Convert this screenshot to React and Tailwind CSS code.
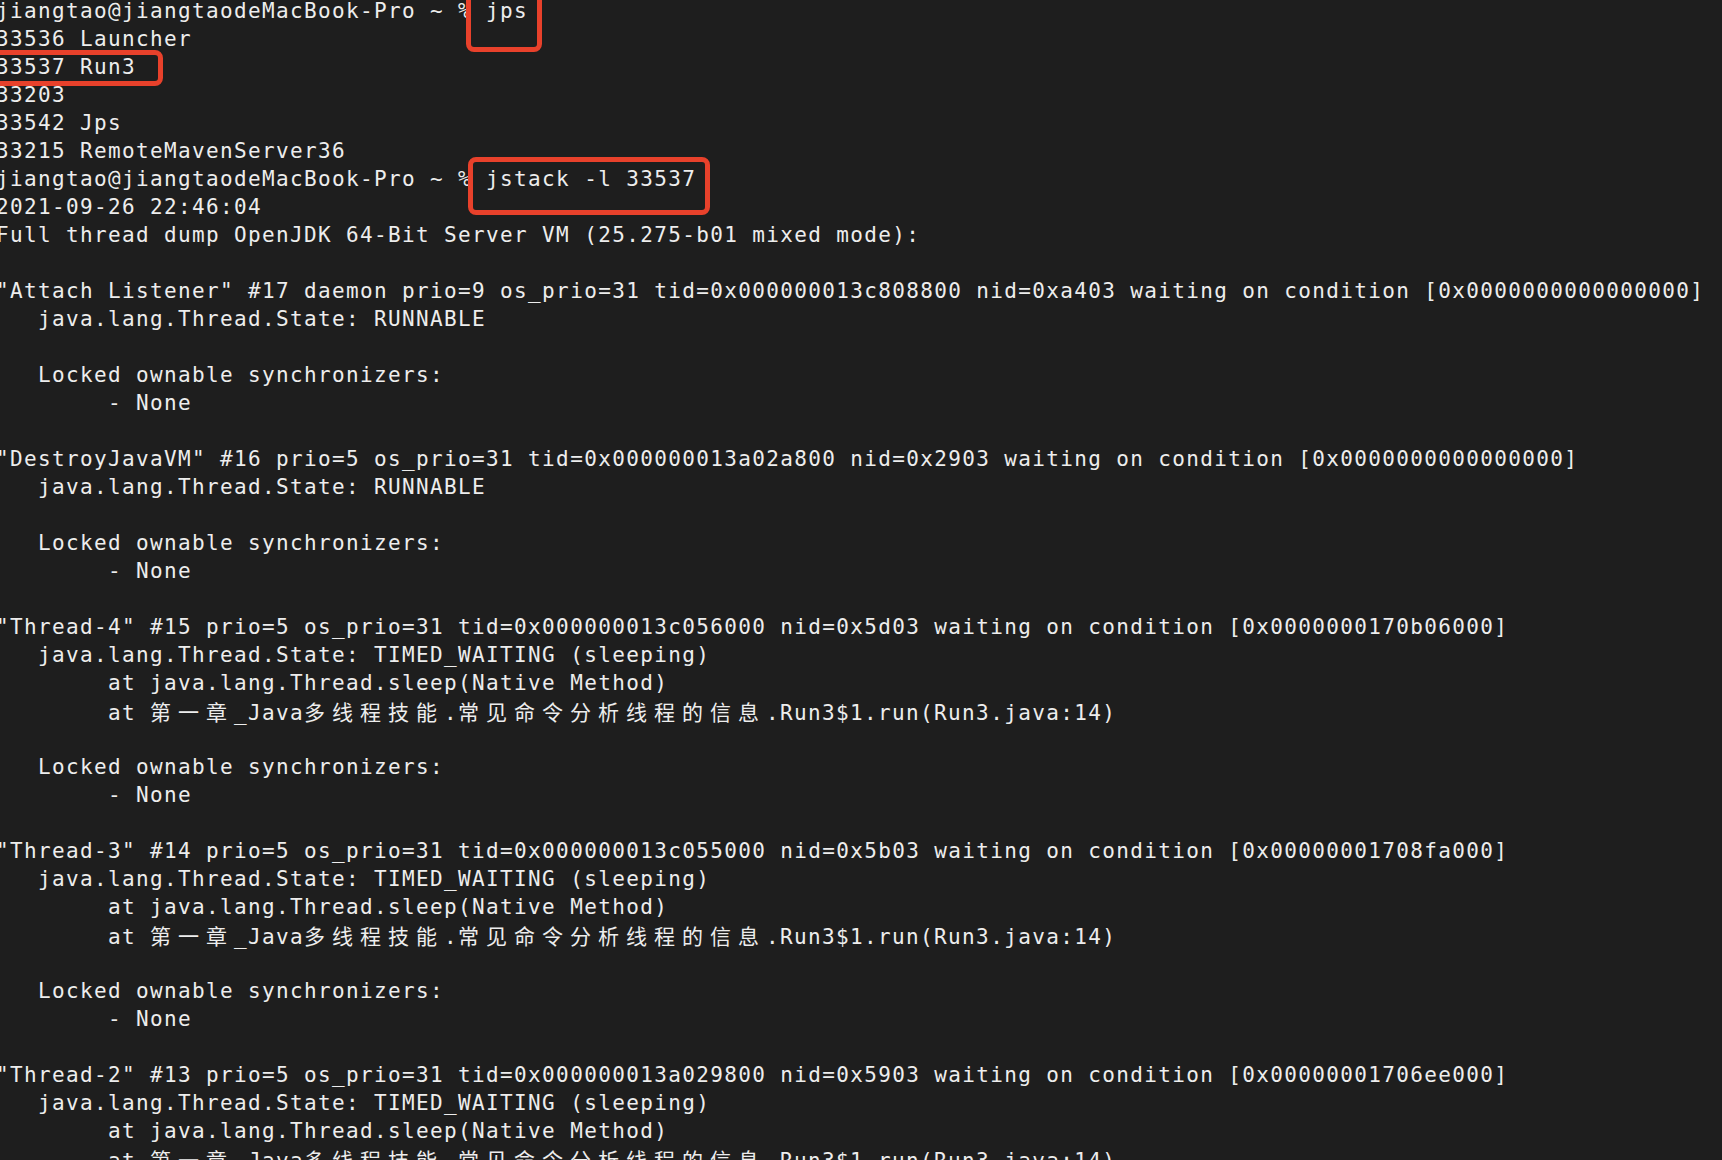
import React from "react";

const TAB = "        ";
const CJK = /[\u4e00-\u9fff]/;

const lines = [
  "jiangtao@jiangtaodeMacBook-Pro ~ % jps",
  "33536 Launcher",
  "33537 Run3",
  "33203",
  "33542 Jps",
  "33215 RemoteMavenServer36",
  "jiangtao@jiangtaodeMacBook-Pro ~ % jstack -l 33537",
  "2021-09-26 22:46:04",
  "Full thread dump OpenJDK 64-Bit Server VM (25.275-b01 mixed mode):",
  "",
  '"Attach Listener" #17 daemon prio=9 os_prio=31 tid=0x000000013c808800 nid=0xa403 waiting on condition [0x0000000000000000]',
  "   java.lang.Thread.State: RUNNABLE",
  "",
  "   Locked ownable synchronizers:",
  TAB + "- None",
  "",
  '"DestroyJavaVM" #16 prio=5 os_prio=31 tid=0x000000013a02a800 nid=0x2903 waiting on condition [0x0000000000000000]',
  "   java.lang.Thread.State: RUNNABLE",
  "",
  "   Locked ownable synchronizers:",
  TAB + "- None",
  "",
  '"Thread-4" #15 prio=5 os_prio=31 tid=0x000000013c056000 nid=0x5d03 waiting on condition [0x0000000170b06000]',
  "   java.lang.Thread.State: TIMED_WAITING (sleeping)",
  TAB + "at java.lang.Thread.sleep(Native Method)",
  TAB + "at 第一章_Java多线程技能.常见命令分析线程的信息.Run3$1.run(Run3.java:14)",
  "",
  "   Locked ownable synchronizers:",
  TAB + "- None",
  "",
  '"Thread-3" #14 prio=5 os_prio=31 tid=0x000000013c055000 nid=0x5b03 waiting on condition [0x00000001708fa000]',
  "   java.lang.Thread.State: TIMED_WAITING (sleeping)",
  TAB + "at java.lang.Thread.sleep(Native Method)",
  TAB + "at 第一章_Java多线程技能.常见命令分析线程的信息.Run3$1.run(Run3.java:14)",
  "",
  "   Locked ownable synchronizers:",
  TAB + "- None",
  "",
  '"Thread-2" #13 prio=5 os_prio=31 tid=0x000000013a029800 nid=0x5903 waiting on condition [0x00000001706ee000]',
  "   java.lang.Thread.State: TIMED_WAITING (sleeping)",
  TAB + "at java.lang.Thread.sleep(Native Method)",
  TAB + "at 第一章_Java多线程技能.常见命令分析线程的信息.Run3$1.run(Run3.java:14)",
];

// terminal draws CJK glyphs in a double-width cell
const Line = ({ text }) => {
  const parts = [];
  let buf = "";
  [...text].forEach((ch, i) => {
    if (CJK.test(ch)) {
      if (buf) parts.push(buf);
      buf = "";
      parts.push(
        <span
          key={i}
          className="inline-block w-[28px] text-left text-[21px] tracking-normal font-['Noto_Sans_CJK_SC',sans-serif]"
        >
          {ch}
        </span>
      );
    } else {
      buf += ch;
    }
  });
  if (buf) parts.push(buf);
  return <div className="h-[28px] whitespace-pre">{parts.length ? parts : " "}</div>;
};

export default function App() {
  return (
    <div className="relative h-[1160px] w-full overflow-hidden bg-[#1e1e1e]">
      <div className="ml-[-4px] mt-[-3px] font-['DejaVu_Sans_Mono',monospace] text-[21px] leading-[28px] tracking-[1.36px] text-[#ededed]">
        {lines.map((l, i) => (
          <Line key={i} text={l} />
        ))}
      </div>

      {/* highlight boxes */}
      <div className="absolute left-[466px] top-[-10px] h-[62px] w-[76px] rounded-[8px] border-[5px] border-[#e8412b]" />
      <div className="absolute left-[-12px] top-[50px] h-[36px] w-[175px] rounded-[8px] border-[5px] border-[#e8412b]" />
      <div className="absolute left-[468px] top-[157px] h-[58px] w-[242px] rounded-[8px] border-[5px] border-[#e8412b]" />
    </div>
  );
}
